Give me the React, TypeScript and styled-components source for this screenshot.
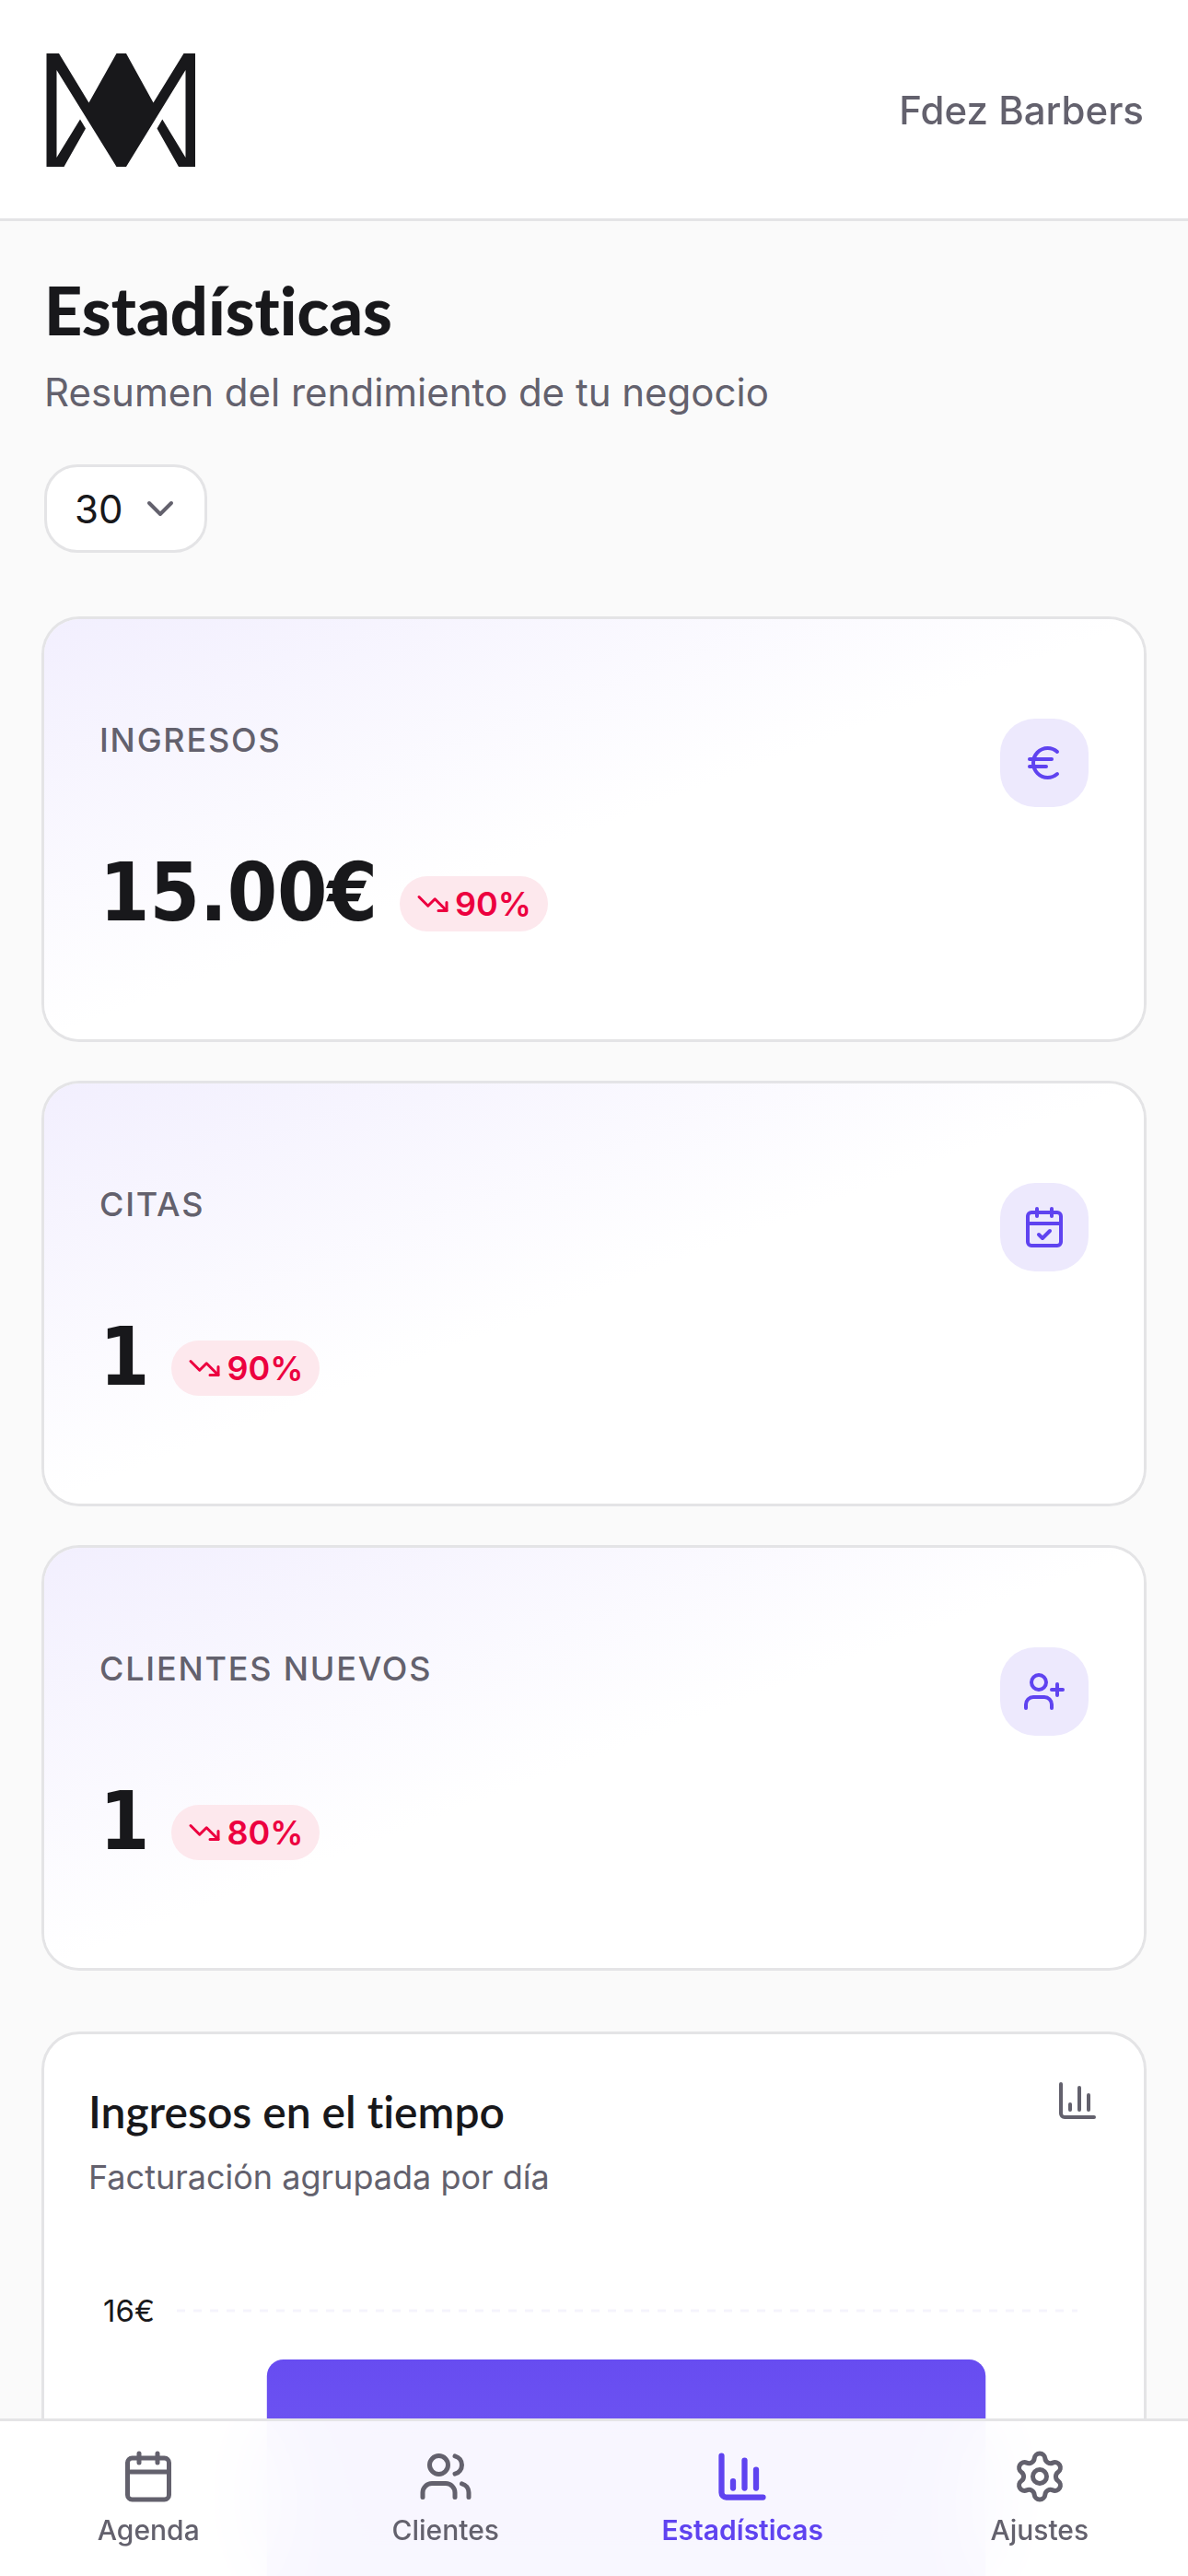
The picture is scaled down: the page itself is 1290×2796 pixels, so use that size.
import React from "react";
import styled, { createGlobalStyle } from "styled-components";
import {
  Calendar,
  CalendarCheck,
  ChartColumn,
  ChevronDown,
  Euro,
  Settings,
  TrendingDown,
  UserPlus,
  Users,
  type LucideIcon,
} from "lucide-react";

const color = {
  page: "#fafafa",
  surface: "#ffffff",
  ink: "#18181b",
  muted: "#63616d",
  border: "#e4e4e6",
  primary: "#5f43f0",
  primarySoft: "#ede9fd",
  primaryTint: "#f2effe",
  danger: "#ec003f",
  dangerSoft: "#fde8ed",
};

const sans = `Inter, "Liberation Sans", sans-serif`;
const display = `Lato, "Liberation Sans", sans-serif`;
const numeric = `"DejaVu Sans Condensed", "DejaVu Sans", sans-serif`;

const GlobalStyle = createGlobalStyle`
  *, *::before, *::after { box-sizing: border-box; }
  body { margin: 0; background: ${color.page}; color: ${color.ink}; font-family: ${sans}; }
  h1, h2, p { margin: 0; }
  svg { display: block; flex-shrink: 0; }
`;

const Shell = styled.div`
  height: 100vh;
  overflow-y: auto;
  scrollbar-width: none;
`;

const Header = styled.header`
  position: sticky;
  top: 0;
  z-index: 2;
  display: flex;
  align-items: center;
  justify-content: space-between;
  padding: 58px 48px 56px;
  background: rgba(255, 255, 255, 0.95);
  border-bottom: 3px solid ${color.border};
`;

const BusinessName = styled.p`
  font-size: 42px;
  line-height: 60px;
  font-weight: 500;
  color: ${color.muted};
`;

const Main = styled.main`
  display: flex;
  flex-direction: column;
  gap: 72px;
  padding: 48px 48px 240px;
`;

const Intro = styled.section`
  display: flex;
  flex-direction: column;
  align-items: flex-start;
`;

const PageTitle = styled.h1`
  font-family: ${display};
  font-size: 72px;
  line-height: 96px;
  font-weight: 900;
  font-variant-ligatures: none;
`;

const PageSubtitle = styled.p`
  margin: 12px 0 48px;
  font-size: 42px;
  line-height: 60px;
  color: ${color.muted};
`;

const PeriodField = styled.div`
  display: grid;
  align-items: center;
  color: ${color.muted};

  > * { grid-area: 1 / 1; }
  > svg { justify-self: end; margin-right: 27px; pointer-events: none; }
`;

const PeriodSelect = styled.select`
  appearance: none;
  height: 96px;
  padding: 0 88px 0 30px;
  border: 3px solid ${color.border};
  border-radius: 36px;
  background: ${color.surface};
  color: ${color.ink};
  font-family: ${sans};
  font-size: 42px;
`;

const StatList = styled.section`
  display: flex;
  flex-direction: column;
  gap: 48px;
`;

const Card = styled.article`
  border-radius: 38px;
  background: ${color.surface};
  box-shadow: 0 0 0 3px ${color.border};
`;

const StatPanel = styled(Card)`
  display: flex;
  justify-content: space-between;
  align-items: flex-start;
  padding: 108px 60px 117px;
  background: linear-gradient(to bottom right, ${color.primaryTint}, ${color.surface} 50%);
`;

const StatBody = styled.div`
  display: flex;
  flex-direction: column;
  gap: 101px;
`;

const StatLabel = styled.h2`
  font-size: 36px;
  line-height: 46px;
  font-weight: 500;
  letter-spacing: 0.05em;
  text-transform: uppercase;
  color: ${color.muted};
`;

const StatFigures = styled.div`
  display: flex;
  align-items: flex-end;
  gap: 24px;
`;

const StatValue = styled.p`
  font-family: ${numeric};
  font-size: 87px;
  line-height: 84px;
  font-weight: 700;
`;

const TrendBadge = styled.span`
  display: inline-flex;
  align-items: center;
  gap: 6px;
  height: 60px;
  padding: 0 18px;
  border-radius: 30px;
  background: ${color.dangerSoft};
  color: ${color.danger};
  font-size: 36px;
  line-height: 46px;
  font-weight: 600;
`;

const IconTile = styled.div`
  display: grid;
  place-items: center;
  width: 96px;
  height: 96px;
  border-radius: 38px;
  background: ${color.primarySoft};
  color: ${color.primary};
`;

const ChartPanel = styled(Card)`
  padding: 48px;
`;

const ChartHeader = styled.div`
  display: flex;
  justify-content: space-between;
  align-items: flex-start;
  margin-bottom: 98px;
  color: ${color.muted};
`;

const ChartTitle = styled.h2`
  font-family: ${display};
  font-size: 48px;
  line-height: 72px;
  font-weight: 600;
  font-variant-ligatures: none;
  color: ${color.ink};
`;

const ChartSubtitle = styled.p`
  margin-top: 8px;
  font-size: 36px;
  line-height: 54px;
`;

const Chart = styled.div`
  display: grid;
  grid-template-columns: 72px 1fr;
  gap: 24px;
  padding-right: 24px;
`;

const AxisMax = styled.p`
  font-size: 33px;
  line-height: 40px;
  text-align: right;
`;

const Plot = styled.svg`
  width: 100%;
  height: 848px;
  margin: 20px 0;
  overflow: visible;
`;

const TabBar = styled.nav`
  position: fixed;
  inset: auto 0 0;
  z-index: 3;
  display: grid;
  grid-template-columns: repeat(4, 1fr);
  border-top: 3px solid ${color.border};
  background: rgba(255, 255, 255, 0.95);
  backdrop-filter: blur(48px);
`;

const Tab = styled.a<{ $active?: boolean }>`
  display: flex;
  flex-direction: column;
  align-items: center;
  gap: 6px;
  padding: 30px 0 27px;
  color: ${(p) => (p.$active ? color.primary : color.muted)};
  font-size: 30px;
  line-height: 45px;
  font-weight: ${(p) => (p.$active ? 600 : 500)};
  text-decoration: none;
`;

const Logo = () => (
  <svg width="166" height="123" viewBox="48 58 166 123" role="img" aria-label="Logo">
    <polygon
      fill={color.ink}
      points="50.5,58 64,58 96.5,111.5 126.5,58 137,58 166.5,111.5 199.5,58 212,58 212,181 194,181 170.5,139.5 176.3,129.5 201.5,171 201.5,76 137,181 126.5,181 61.5,76 61.5,171 87,129.5 93,139.5 69.5,181 50.5,181"
    />
  </svg>
);

type Stat = { label: string; value: string; trend: string; icon: LucideIcon };

const stats: Stat[] = [
  { label: "Ingresos", value: "15.00€", trend: "90%", icon: Euro },
  { label: "Citas", value: "1", trend: "90%", icon: CalendarCheck },
  { label: "Clientes nuevos", value: "1", trend: "80%", icon: UserPlus },
];

const StatCard = ({ label, value, trend, icon: Icon }: Stat) => (
  <StatPanel>
    <StatBody>
      <StatLabel>{label}</StatLabel>
      <StatFigures>
        <StatValue>{value}</StatValue>
        <TrendBadge>
          <TrendingDown size={36} />
          {trend}
        </TrendBadge>
      </StatFigures>
    </StatBody>
    <IconTile>
      <Icon size={48} />
    </IconTile>
  </StatPanel>
);

const PLOT_HEIGHT = 848;
const MAX_VALUE = 16;
const gridValues = [16, 12, 8, 4, 0];
const revenue = 15;
const toY = (value: number) => PLOT_HEIGHT * (1 - value / MAX_VALUE);

const RevenueChart = () => (
  <Chart>
    <AxisMax>{MAX_VALUE}€</AxisMax>
    <Plot>
      <defs>
        <linearGradient id="bar" x1="0" y1="0" x2="0" y2="1">
          <stop offset="0" stopColor={color.primary} stopOpacity="0.95" />
          <stop offset="1" stopColor={color.primary} stopOpacity="0.6" />
        </linearGradient>
      </defs>
      {gridValues.map((value) => (
        <line
          key={value}
          x1="0"
          x2="100%"
          y1={toY(value)}
          y2={toY(value)}
          stroke="#f5f4fc"
          strokeWidth="3"
          strokeDasharray="9 9"
        />
      ))}
      <rect x="10%" width="79.8%" y={toY(revenue)} height={PLOT_HEIGHT - toY(revenue)} rx="18" fill="url(#bar)" />
    </Plot>
  </Chart>
);

const tabs: { label: string; icon: LucideIcon; active?: boolean }[] = [
  { label: "Agenda", icon: Calendar },
  { label: "Clientes", icon: Users },
  { label: "Estadísticas", icon: ChartColumn, active: true },
  { label: "Ajustes", icon: Settings },
];

export default function App() {
  return (
    <Shell>
      <GlobalStyle />
      <Header>
        <Logo />
        <BusinessName>Fdez Barbers</BusinessName>
      </Header>
      <Main>
        <Intro>
          <PageTitle>Estadísticas</PageTitle>
          <PageSubtitle>Resumen del rendimiento de tu negocio</PageSubtitle>
          <PeriodField>
            <PeriodSelect aria-label="Periodo en días" defaultValue="30">
              <option>7</option>
              <option>30</option>
              <option>90</option>
            </PeriodSelect>
            <ChevronDown size={48} />
          </PeriodField>
        </Intro>
        <StatList>
          {stats.map((s) => (
            <StatCard key={s.label} {...s} />
          ))}
        </StatList>
        <ChartPanel>
          <ChartHeader>
            <div>
              <ChartTitle>Ingresos en el tiempo</ChartTitle>
              <ChartSubtitle>Facturación agrupada por día</ChartSubtitle>
            </div>
            <ChartColumn size={48} />
          </ChartHeader>
          <RevenueChart />
        </ChartPanel>
      </Main>
      <TabBar>
        {tabs.map(({ label, icon: Icon, active }) => (
          <Tab key={label} href="#" $active={active} aria-current={active ? "page" : undefined}>
            <Icon size={60} strokeWidth={active ? 2.5 : 2} />
            {label}
          </Tab>
        ))}
      </TabBar>
    </Shell>
  );
}
